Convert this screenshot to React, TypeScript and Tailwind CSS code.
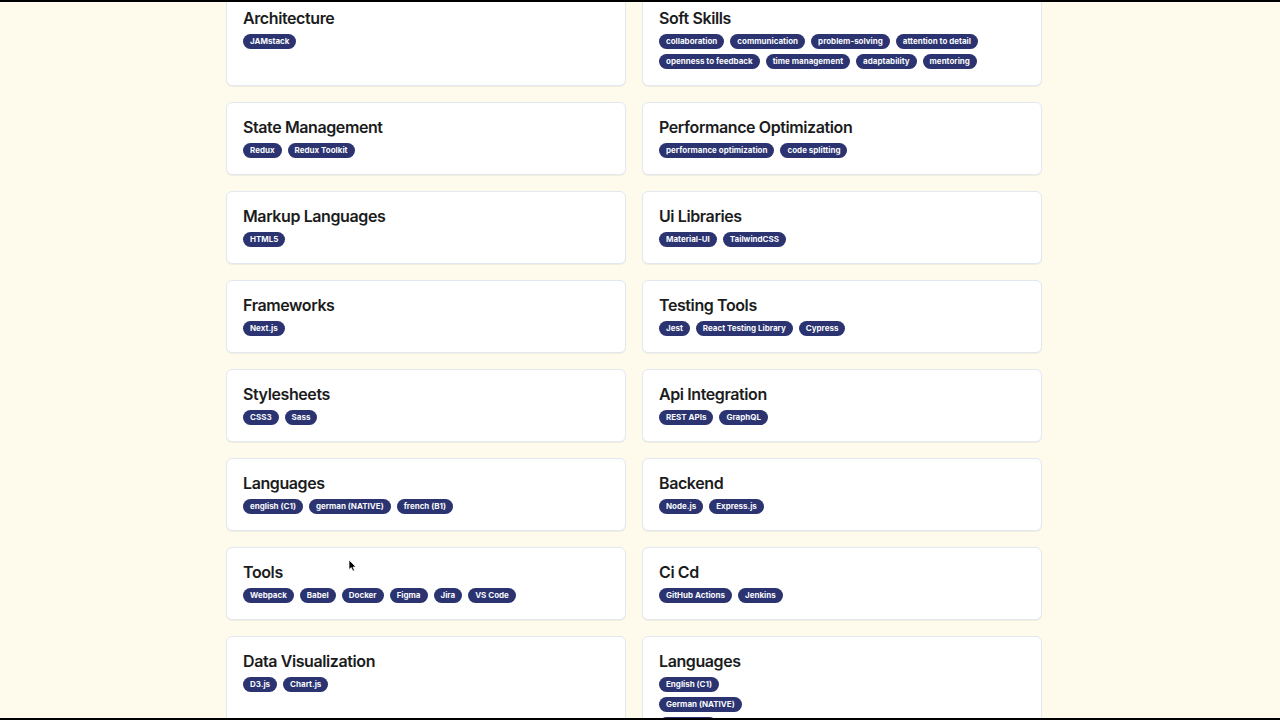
import React from 'react';

interface SkillGroup {
  title: string;
  skills: string[];
  stacked?: boolean;
}

const groups: SkillGroup[] = [
  { title: 'Architecture', skills: ['JAMstack'] },
  {
    title: 'Soft Skills',
    skills: [
      'collaboration',
      'communication',
      'problem-solving',
      'attention to detail',
      'openness to feedback',
      'time management',
      'adaptability',
      'mentoring',
    ],
  },
  { title: 'State Management', skills: ['Redux', 'Redux Toolkit'] },
  { title: 'Performance Optimization', skills: ['performance optimization', 'code splitting'] },
  { title: 'Markup Languages', skills: ['HTML5'] },
  { title: 'Ui Libraries', skills: ['Material-UI', 'TailwindCSS'] },
  { title: 'Frameworks', skills: ['Next.js'] },
  { title: 'Testing Tools', skills: ['Jest', 'React Testing Library', 'Cypress'] },
  { title: 'Stylesheets', skills: ['CSS3', 'Sass'] },
  { title: 'Api Integration', skills: ['REST APIs', 'GraphQL'] },
  { title: 'Languages', skills: ['english (C1)', 'german (NATIVE)', 'french (B1)'] },
  { title: 'Backend', skills: ['Node.js', 'Express.js'] },
  { title: 'Tools', skills: ['Webpack', 'Babel', 'Docker', 'Figma', 'Jira', 'VS Code'] },
  { title: 'Ci Cd', skills: ['GitHub Actions', 'Jenkins'] },
  { title: 'Data Visualization', skills: ['D3.js', 'Chart.js'] },
  { title: 'Languages', skills: ['English (C1)', 'German (NATIVE)', 'French (B1)'], stacked: true },
];

function SkillCard({ title, skills, stacked }: SkillGroup) {
  return (
    <section className="rounded-md border border-slate-200 bg-white p-4 shadow-2xs">
      <h3 className="mb-2 text-base leading-none font-semibold tracking-tight text-[#1b1c20]">{title}</h3>
      <ul className={`flex gap-x-1.5 gap-y-[5px] ${stacked ? 'flex-col items-start' : 'flex-wrap'}`}>
        {skills.map((skill) => (
          <li
            key={skill}
            className="rounded-full bg-[#2b3370] px-[7px] py-0.5 text-[8px] leading-[11px] font-bold text-slate-50"
          >
            {skill}
          </li>
        ))}
      </ul>
    </section>
  );
}

export default function App() {
  return (
    <div className="relative h-screen overflow-hidden border-y-2 border-black bg-[#fefbec] pr-3 font-['Inter',sans-serif]">
      <main className="mx-auto -mt-[9px] grid max-w-[816px] grid-cols-2 gap-4">
        {groups.map((group, index) => (
          <SkillCard key={index} {...group} />
        ))}
      </main>

      {/* Mouse pointer */}
      <svg
        className="pointer-events-none absolute top-[556px] left-[347px] h-4 w-3"
        viewBox="0 0 12 16"
        aria-hidden="true"
      >
        <path
          d="M2 2v9.6l2.3-2 1.5 3.5 1.7-.7L6 9h3z"
          fill="#000"
          stroke="#fff"
          strokeWidth="0.7"
        />
      </svg>
    </div>
  );
}
